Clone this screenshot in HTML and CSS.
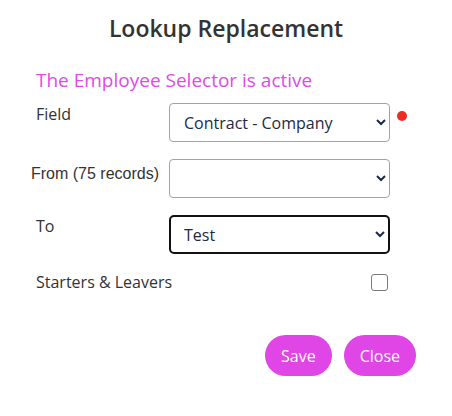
FILE: index.html
```html
<!DOCTYPE html>
<html lang="en">
<head>
  <meta charset="UTF-8" />
  <title>Lookup Replacement</title>
  <link rel="stylesheet" href="styles.css">
</head>
<body>
  <div class="dialog">
    <h1 class="dialog-title">Lookup Replacement</h1>
    <p class="notice">The Employee Selector is active</p>

    <div class="form-row">
      <label class="form-label">Field</label>
      <select class="form-select">
        <option>Contract - Company</option>
      </select>
      <span class="required-dot"></span>
    </div>

    <div class="form-row">
      <label class="form-label label-alt">From (75 records)</label>
      <select class="form-select">
        <option></option>
      </select>
    </div>

    <div class="form-row">
      <label class="form-label">To</label>
      <select class="form-select is-focused">
        <option>Test</option>
      </select>
    </div>

    <div class="form-row check-row">
      <label class="form-label">Starters &amp; Leavers</label>
      <input type="checkbox" class="form-check">
    </div>

    <div class="actions">
      <button class="pill-btn">Save</button>
      <button class="pill-btn">Close</button>
    </div>
  </div>
</body>
</html>
```

FILE: styles.css
```css
body {
  margin: 0;
  font-family: 'Open Sans', sans-serif;
  color: #333333;
  background: #ffffff;
}

.dialog {
  width: 452px;
  padding: 12px 36px 0 36px;
  box-sizing: border-box;
}

.dialog-title {
  margin: 0;
  text-align: center;
  font-size: 23px;
  font-weight: 600;
  line-height: 32px;
  color: #333333;
}

.notice {
  margin: 23px 0 0 0;
  font-size: 19px;
  line-height: 26px;
  color: #e04ae6;
}

.form-row {
  display: grid;
  grid-template-columns: 133px 221px 1fr;
  align-items: start;
  margin-top: 17px;
}

.form-row:first-of-type {
  margin-top: 10px;
}

.form-label {
  font-size: 16px;
  line-height: 22px;
  color: #333333;
}

.label-alt {
  font-family: 'Liberation Sans', Arial, sans-serif;
  margin-left: -5px;
  padding-top: 4px;
}

.form-select {
  height: 39px;
  padding: 0 8px 0 10px;
  font-family: 'Open Sans', sans-serif;
  font-size: 16px;
  color: #1d2a44;
  background-color: #ffffff;
  border: 1px solid #a3a3a3;
  border-radius: 4px;
}

.form-select.is-focused {
  border: 2px solid #111111;
  border-radius: 5px;
  padding-left: 9px;
}

.required-dot {
  width: 10px;
  height: 10px;
  margin: 8px 0 0 7px;
  border-radius: 50%;
  background: #ee2b24;
}

.check-row {
  grid-template-columns: 1fr auto;
  width: 354px;
}

.form-check {
  appearance: none;
  width: 17px;
  height: 17px;
  margin: 3px 2px 0 0;
  border: 1px solid #7a7a7a;
  border-radius: 3px;
  background: #ffffff;
}

.actions {
  display: flex;
  justify-content: flex-end;
  gap: 12px;
  margin-top: 42px;
}

.pill-btn {
  height: 41px;
  padding: 0 16px;
  font-family: 'Open Sans', sans-serif;
  font-size: 16px;
  color: #ffffff;
  background-color: #e045e6;
  border: none;
  border-radius: 21px;
}
```
